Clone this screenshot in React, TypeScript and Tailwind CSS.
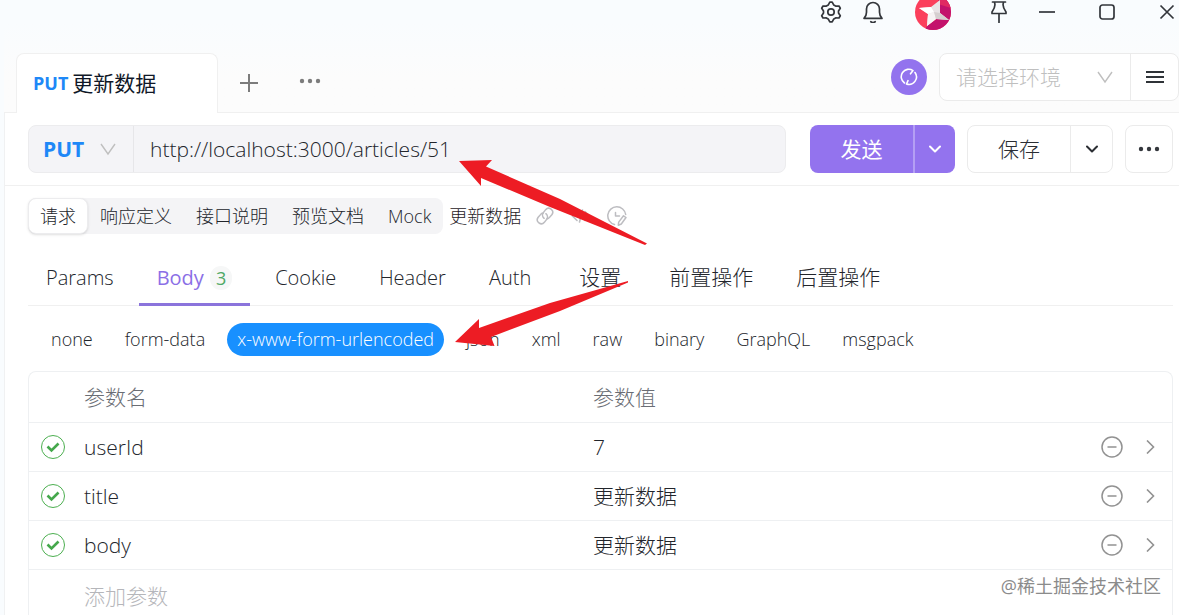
import React, { useState } from "react";

function ThinChevron() {
  return (
    <svg className="pointer-events-none size-4 shrink-0" viewBox="0 0 16 16" fill="none" stroke="#bfbfbf" strokeWidth="1.4">
      <path d="M1 3l7 10 7-10" />
    </svg>
  );
}

function BoldChevron() {
  return (
    <svg className="size-3" viewBox="0 0 12 12" fill="none" stroke="currentColor" strokeWidth="2" strokeLinecap="round" strokeLinejoin="round">
      <path d="M1 3.5l5 5 5-5" />
    </svg>
  );
}

function Dots() {
  return (
    <svg className="h-2 w-[22px]" viewBox="0 0 22 8" fill="currentColor">
      <circle cx="3" cy="4" r="2.2" />
      <circle cx="11" cy="4" r="2.2" />
      <circle cx="19" cy="4" r="2.2" />
    </svg>
  );
}

function GearIcon() {
  return (
    <svg className="size-[22px]" viewBox="0 0 22 22" fill="none" stroke="currentColor" strokeWidth="1.7" strokeLinejoin="round">
      <path d="M9.800 1.200h2.400l1.600 2.900 1.800 1 3.400-.1 1.300 2.200-1.800 2.800v2l1.800 2.800-1.300 2.200-3.400-.1-1.800 1-1.600 2.900H9.800l-1.600-2.900-1.800-1-3.400.1-1.300-2.200L3.500 12v-2L1.700 7.200 3 5l3.400.1 1.800-1z" />
      <circle cx="11" cy="11" r="3.2" />
    </svg>
  );
}

function BellIcon() {
  return (
    <svg className="size-[22px]" viewBox="0 0 22 22" fill="none" stroke="currentColor" strokeWidth="1.7" strokeLinejoin="round" strokeLinecap="round">
      <path d="M2 17.300c1.800-1.800 2.500-3.500 2.500-6V8a6.500 6.500 0 0113 0v3.300c0 2.500.7 4.200 2.500 6z" />
      <path d="M8.800 20.700c1.200.9 3.200.9 4.400 0" />
    </svg>
  );
}

function PinIcon() {
  return (
    <svg className="size-[22px]" viewBox="0 0 22 22" fill="none" stroke="currentColor" strokeWidth="1.7" strokeLinejoin="round" strokeLinecap="round">
      <path d="M4.500 1h13M6.500 1.500c1 2.500.8 5-2.500 9.500v1.500h14V11c-3.300-4.500-3.500-7-2.500-9.500M11 12.500V21.500" />
    </svg>
  );
}

function Avatar() {
  return (
    <svg className="size-9 rounded-full" viewBox="0 0 36 36">
      <rect width="36" height="36" fill="#fb3f5c" />
      <path d="M23 6H36v30H10l2-4 11-8z" fill="#c3126c" />
      <path d="M36 0v14L23 10V6z" fill="#e02a62" />
      <path d="M4 14l12-1 9-7v13l9 7-13-1-9 7 1-12z" fill="#e9e3e6" />
      <path d="M4 14l12-1 3 5-6 2z" fill="#ffffff" />
      <path d="M13 20l6-2 2 7-9 7z" fill="#f7f3f4" />
      <path d="M25 19l9 7-13-1-2-7z" fill="#d6cfd0" />
    </svg>
  );
}

function TitleBar() {
  return (
    <header className="relative z-10 flex h-6 items-center justify-end pr-1 text-[#33363b]">
      <button aria-label="Settings"><GearIcon /></button>
      <button aria-label="Notifications" className="ml-5"><BellIcon /></button>
      <button aria-label="Account" className="ml-[31px]"><Avatar /></button>
      <button aria-label="Pin" className="ml-[37px]"><PinIcon /></button>
      <button aria-label="Minimize" className="ml-[29px]">
        <svg className="size-4" viewBox="0 0 16 16" stroke="currentColor" strokeWidth="1.7"><path d="M0 8h16" /></svg>
      </button>
      <button aria-label="Maximize" className="ml-11">
        <svg className="size-4" viewBox="0 0 16 16" fill="none" stroke="currentColor" strokeWidth="1.7"><rect x="1" y="1" width="14" height="14" rx="2.5" /></svg>
      </button>
      <button aria-label="Close" className="ml-11">
        <svg className="size-4" viewBox="0 0 16 16" stroke="currentColor" strokeWidth="1.7"><path d="M1.500 1.500l13 13M14.500 1.500l-13 13" /></svg>
      </button>
    </header>
  );
}

function TabStrip() {
  return (
    <div className="flex h-[60px] items-end">
      <div className="h-full w-3 border-b border-[#f0f0f0]" />
      <div className="flex h-full w-[202px] items-center gap-1 rounded-t-lg border border-b-0 border-[#f0f0f0] bg-white pl-4">
        <span className="text-[18px] font-bold text-[#1e88f7]">PUT</span>
        <span className="text-[21px] text-[#101828]">更新数据</span>
      </div>
      <div className="flex h-full flex-1 items-start border-b border-[#f0f0f0]">
        <button aria-label="New tab" className="mt-5 ml-[21px] text-[#7c7c7c]">
          <svg className="size-5" viewBox="0 0 20 20" stroke="currentColor" strokeWidth="2"><path d="M10 1v18M1 10h18" /></svg>
        </button>
        <button aria-label="More tabs" className="mt-6 ml-10 flex h-2 text-[#7c7c7c]"><Dots /></button>
        <button aria-label="Sync" className="mt-1.5 mr-3 ml-auto flex size-9 items-center justify-center rounded-full bg-[#9373ee] text-white">
          <svg className="size-[18px]" viewBox="0 0 18 18" fill="none" stroke="currentColor" strokeWidth="1.6" strokeLinecap="round" strokeLinejoin="round">
            <path d="M4.500 15A7.500 7.500 0 0113 2.600L10.500 5.800" />
            <path d="M15 4.500A7.500 7.500 0 016.500 16L8 12.700" />
          </svg>
        </button>
        <div className="flex h-12 w-60 rounded-lg border border-[#ebebeb] bg-white">
          <label className="flex flex-1 items-center pr-[17px] pl-4">
            <select aria-label="环境" className="min-w-0 flex-1 appearance-none bg-transparent pt-0.5 text-[21px] font-light text-[#bfbfbf] outline-none">
              <option>请选择环境</option>
            </select>
            <ThinChevron />
          </label>
          <button aria-label="Environments" className="flex w-12 items-center justify-center border-l border-[#ebebeb] text-[#2f3338]">
            <svg className="h-3 w-[18px]" viewBox="0 0 18 12" stroke="currentColor" strokeWidth="2"><path d="M0 1h18M0 6h18M0 11h18" /></svg>
          </button>
        </div>
      </div>
    </div>
  );
}

function RequestBar() {
  return (
    <div className="flex h-[73px] items-center border-b border-[#f0f0f0] pr-1.5 pl-[23px]">
      <div className="mr-6 flex h-12 flex-1 rounded-lg border border-[#ececee] bg-[#f4f4f7]">
        <label className="flex w-[105px] items-center border-r border-[#e6e6e9] pr-[17px] pl-3.5">
          <select aria-label="Method" defaultValue="PUT" className="min-w-0 flex-1 appearance-none bg-transparent pt-0.5 text-[21px] font-bold text-[#1e88f7] outline-none">
            <option>GET</option>
            <option>POST</option>
            <option>PUT</option>
          </select>
          <ThinChevron />
        </label>
        <input aria-label="URL" defaultValue="http://localhost:3000/articles/51" className="min-w-0 flex-1 bg-transparent px-4 pt-0.5 text-[21px] font-light text-[#22252b] outline-none" />
      </div>
      <div className="mr-3 flex h-12 w-[145px] overflow-hidden rounded-lg bg-[#9373ee] text-white">
        <button className="flex-1 pt-0.5 text-[21px]">发送</button>
        <button aria-label="Send options" className="flex w-[42px] items-center justify-center border-l-2 border-[#b49ff4]"><BoldChevron /></button>
      </div>
      <div className="mr-3 flex h-12 w-[146px] rounded-lg border border-[#ebebeb] text-[#2b2e33]">
        <button className="flex-1 pt-0.5 text-[21px] font-light">保存</button>
        <button aria-label="Save options" className="flex w-[42px] items-center justify-center border-l border-[#ebebeb]"><BoldChevron /></button>
      </div>
      <button aria-label="More" className="flex size-12 items-center justify-center rounded-lg border border-[#ebebeb] text-[#35383d]"><Dots /></button>
    </div>
  );
}

const views = ["请求", "响应定义", "接口说明", "预览文档", "Mock"];

function ViewSwitch() {
  const [active, setActive] = useState("请求");
  return (
    <div className="mt-3 flex h-9 items-center px-[23px]">
      <div className="flex h-9 rounded-lg bg-[#f4f4f6]">
        {views.map((v) => (
          <button
            key={v}
            onClick={() => setActive(v)}
            className={
              v === active
                ? "rounded-lg border border-[#ececee] bg-white px-[11px] text-[18px] font-light text-[#22252b] shadow-sm"
                : "px-3 text-[18px] font-light text-[#22252b]"
            }
          >
            {v}
          </button>
        ))}
      </div>
      <span className="ml-1.5 text-[18px] font-light text-[#1f2227]">更新数据</span>
      <div className="ml-3.5 flex items-center gap-4 text-[#bdbdc1]">
        <svg className="size-5" viewBox="-1 -1 22 22" fill="none" stroke="currentColor" strokeWidth="1.7" strokeLinecap="round">
          <path d="M9 12.500a4.500 4.500 0 01-.8-6.200l2.500-3.300a4.400 4.400 0 017 5.300L15 11.500a4.500 4.500 0 01-3 1.700" />
          <path d="M11 7.500a4.500 4.500 0 01.8 6.200l-2.500 3.300a4.400 4.400 0 01-7-5.300L5 8.500a4.500 4.500 0 013-1.700" />
        </svg>
        <svg className="size-5" viewBox="0 0 20 20" fill="none" stroke="currentColor" strokeWidth="1.6" strokeLinecap="round">
          <path d="M6 5.500L1.500 10 6 14.500M14 5.500l4.500 4.500-4.500 4.500M11.500 4l-3 12" />
        </svg>
        <svg className="size-5" viewBox="0 0 20 20" fill="none" stroke="currentColor" strokeWidth="1.5" strokeLinecap="round" strokeLinejoin="round">
          <path d="M7.500 18.500A9 9 0 1118.700 8.500M8.500 6.500v3.500h4" />
          <path d="M16.500 9.800l2.500 1.700-4.700 6.500-3 1.200.4-3.100z" />
        </svg>
      </div>
    </div>
  );
}

const sections = [
  { label: "Params", style: "px-[18px] text-[20px]" },
  { label: "Body", style: "px-[18px] text-[20px]", count: 3 },
  { label: "Cookie", style: "px-[18px] text-[20px]" },
  { label: "Header", style: "px-[18px] text-[20px]" },
  { label: "Auth", style: "px-[18px] text-[20px]" },
  { label: "设置", style: "px-[23px] text-[21px]" },
  { label: "前置操作", style: "px-[18px] text-[21px]" },
  { label: "后置操作", style: "px-[18px] text-[21px]" },
];

function SectionTabs() {
  const [active, setActive] = useState("Body");
  return (
    <div role="tablist" className="mt-4 mr-1.5 ml-[23px] flex h-14 gap-[7px] border-b border-[#f0f0f0]">
      {sections.map((s) => (
        <button
          key={s.label}
          role="tab"
          aria-selected={s.label === active}
          onClick={() => setActive(s.label)}
          className={`${s.style} ${
            s.label === active
              ? "-mb-px flex items-center gap-1.5 border-b-3 border-[#8b74dc] pt-0.5 text-[#8b6fe6]"
              : "flex items-center font-light text-[#22252b]"
          }`}
        >
          {s.label}
          {s.count && <span className="rounded-full bg-[#f6f7f7] px-1.5 text-[18px] leading-6 text-[#4fa866]">{s.count}</span>}
        </button>
      ))}
    </div>
  );
}

const bodyTypes = ["none", "form-data", "x-www-form-urlencoded", "json", "xml", "raw", "binary", "GraphQL", "msgpack"];

function BodyTypes() {
  const [active, setActive] = useState("x-www-form-urlencoded");
  return (
    <div className="mt-[17px] flex h-[33px] gap-3 pl-9">
      {bodyTypes.map((t) => (
        <label
          key={t}
          className={
            t === active
              ? "flex items-center rounded-full bg-[#1890ff] px-2.5 text-[18px] font-light text-white"
              : "flex items-center px-2.5 text-[18px] font-light text-[#22252b]"
          }
        >
          <input type="radio" name="body-type" className="sr-only" checked={t === active} onChange={() => setActive(t)} />
          {t}
        </label>
      ))}
    </div>
  );
}

const params = [
  { name: "userId", value: "7" },
  { name: "title", value: "更新数据" },
  { name: "body", value: "更新数据" },
];

function ParamRow({ name, value }: { name: string; value: string }) {
  return (
    <tr className="h-[49px] border-b border-[#eef0f2]">
      <td className="pl-3">
        <label className="grid size-6 place-items-center">
          <input type="checkbox" defaultChecked aria-label={name} className="col-start-1 row-start-1 size-6 appearance-none rounded-full border border-[#4caf50]" />
          <svg className="pointer-events-none col-start-1 row-start-1 size-3.5" viewBox="0 0 14 14" fill="none" stroke="#45a84c" strokeWidth="2.6">
            <path d="M1.500 6.500l4 4 7-7" />
          </svg>
        </label>
      </td>
      <td className="pt-0.5">{name}</td>
      <td className="pt-0.5">{value}</td>
      <td>
        <div className="flex items-center justify-end gap-5 pr-[15px] text-[#929292]">
          <button aria-label="Remove">
            <svg className="block size-[22px]" viewBox="0 0 22 22" fill="none" stroke="currentColor" strokeWidth="1.5"><circle cx="11" cy="11" r="10" /><path d="M6.500 11h9" /></svg>
          </button>
          <button aria-label="Expand">
            <svg className="block size-3.5" viewBox="0 0 14 14" fill="none" stroke="currentColor" strokeWidth="1.6"><path d="M4 .5L10.500 7 4 13.500" /></svg>
          </button>
        </div>
      </td>
    </tr>
  );
}

function ParamTable() {
  return (
    <div className="mt-[15px] mr-1.5 ml-[23px] flex-1 rounded-t-lg border border-b-0 border-[#eef0f2]">
      <table className="w-full table-fixed border-collapse text-[21px] font-light text-[#22252b]">
        <thead>
          <tr className="h-[50px] border-b border-[#eef0f2] text-left text-[#6a6d74]">
            <th className="w-[55px]" />
            <th className="w-[509px] pt-0.5 font-light">参数名</th>
            <th className="pt-0.5 font-light">参数值</th>
            <th className="w-[100px]" />
          </tr>
        </thead>
        <tbody>
          {params.map((p) => (
            <ParamRow key={p.name} {...p} />
          ))}
          <tr className="h-[54px]">
            <td />
            <td colSpan={3}>
              <input aria-label="添加参数" placeholder="添加参数" className="w-full bg-transparent text-[21px] font-light outline-none placeholder:text-[#b5b6ba]" />
            </td>
          </tr>
        </tbody>
      </table>
    </div>
  );
}

function Annotations() {
  return (
    <svg className="pointer-events-none absolute top-0 left-0 h-[360px] w-[700px]" viewBox="0 0 700 360" fill="#ed1c24">
      <path d="M459 161L492 160 486 166.500 560 199 647 243.500 645 245 550 207 481 178 481 186z" />
      <path d="M455 342L479 319 479 328 550 303 628 281 628 282.500 560 311 491 337 494.500 346z" />
    </svg>
  );
}

export default function App() {
  return (
    <div className="relative flex h-screen flex-col overflow-hidden bg-[#f9fcfe] font-['Open_Sans','Noto_Sans_CJK_SC',sans-serif]">
      <TitleBar />
      <main className="ml-1 flex flex-1 flex-col border-l border-[#f0f1f2] bg-white">
        <div className="-ml-px bg-linear-to-b from-[#f9fcfe] to-[#fcfcfc] to-60% pt-[29px]">
          <TabStrip />
        </div>
        <RequestBar />
        <ViewSwitch />
        <SectionTabs />
        <BodyTypes />
        <ParamTable />
      </main>
      <Annotations />
      <p className="absolute right-[18px] bottom-[15px] text-[18px] text-[#8b8b8b]">@稀土掘金技术社区</p>
    </div>
  );
}
